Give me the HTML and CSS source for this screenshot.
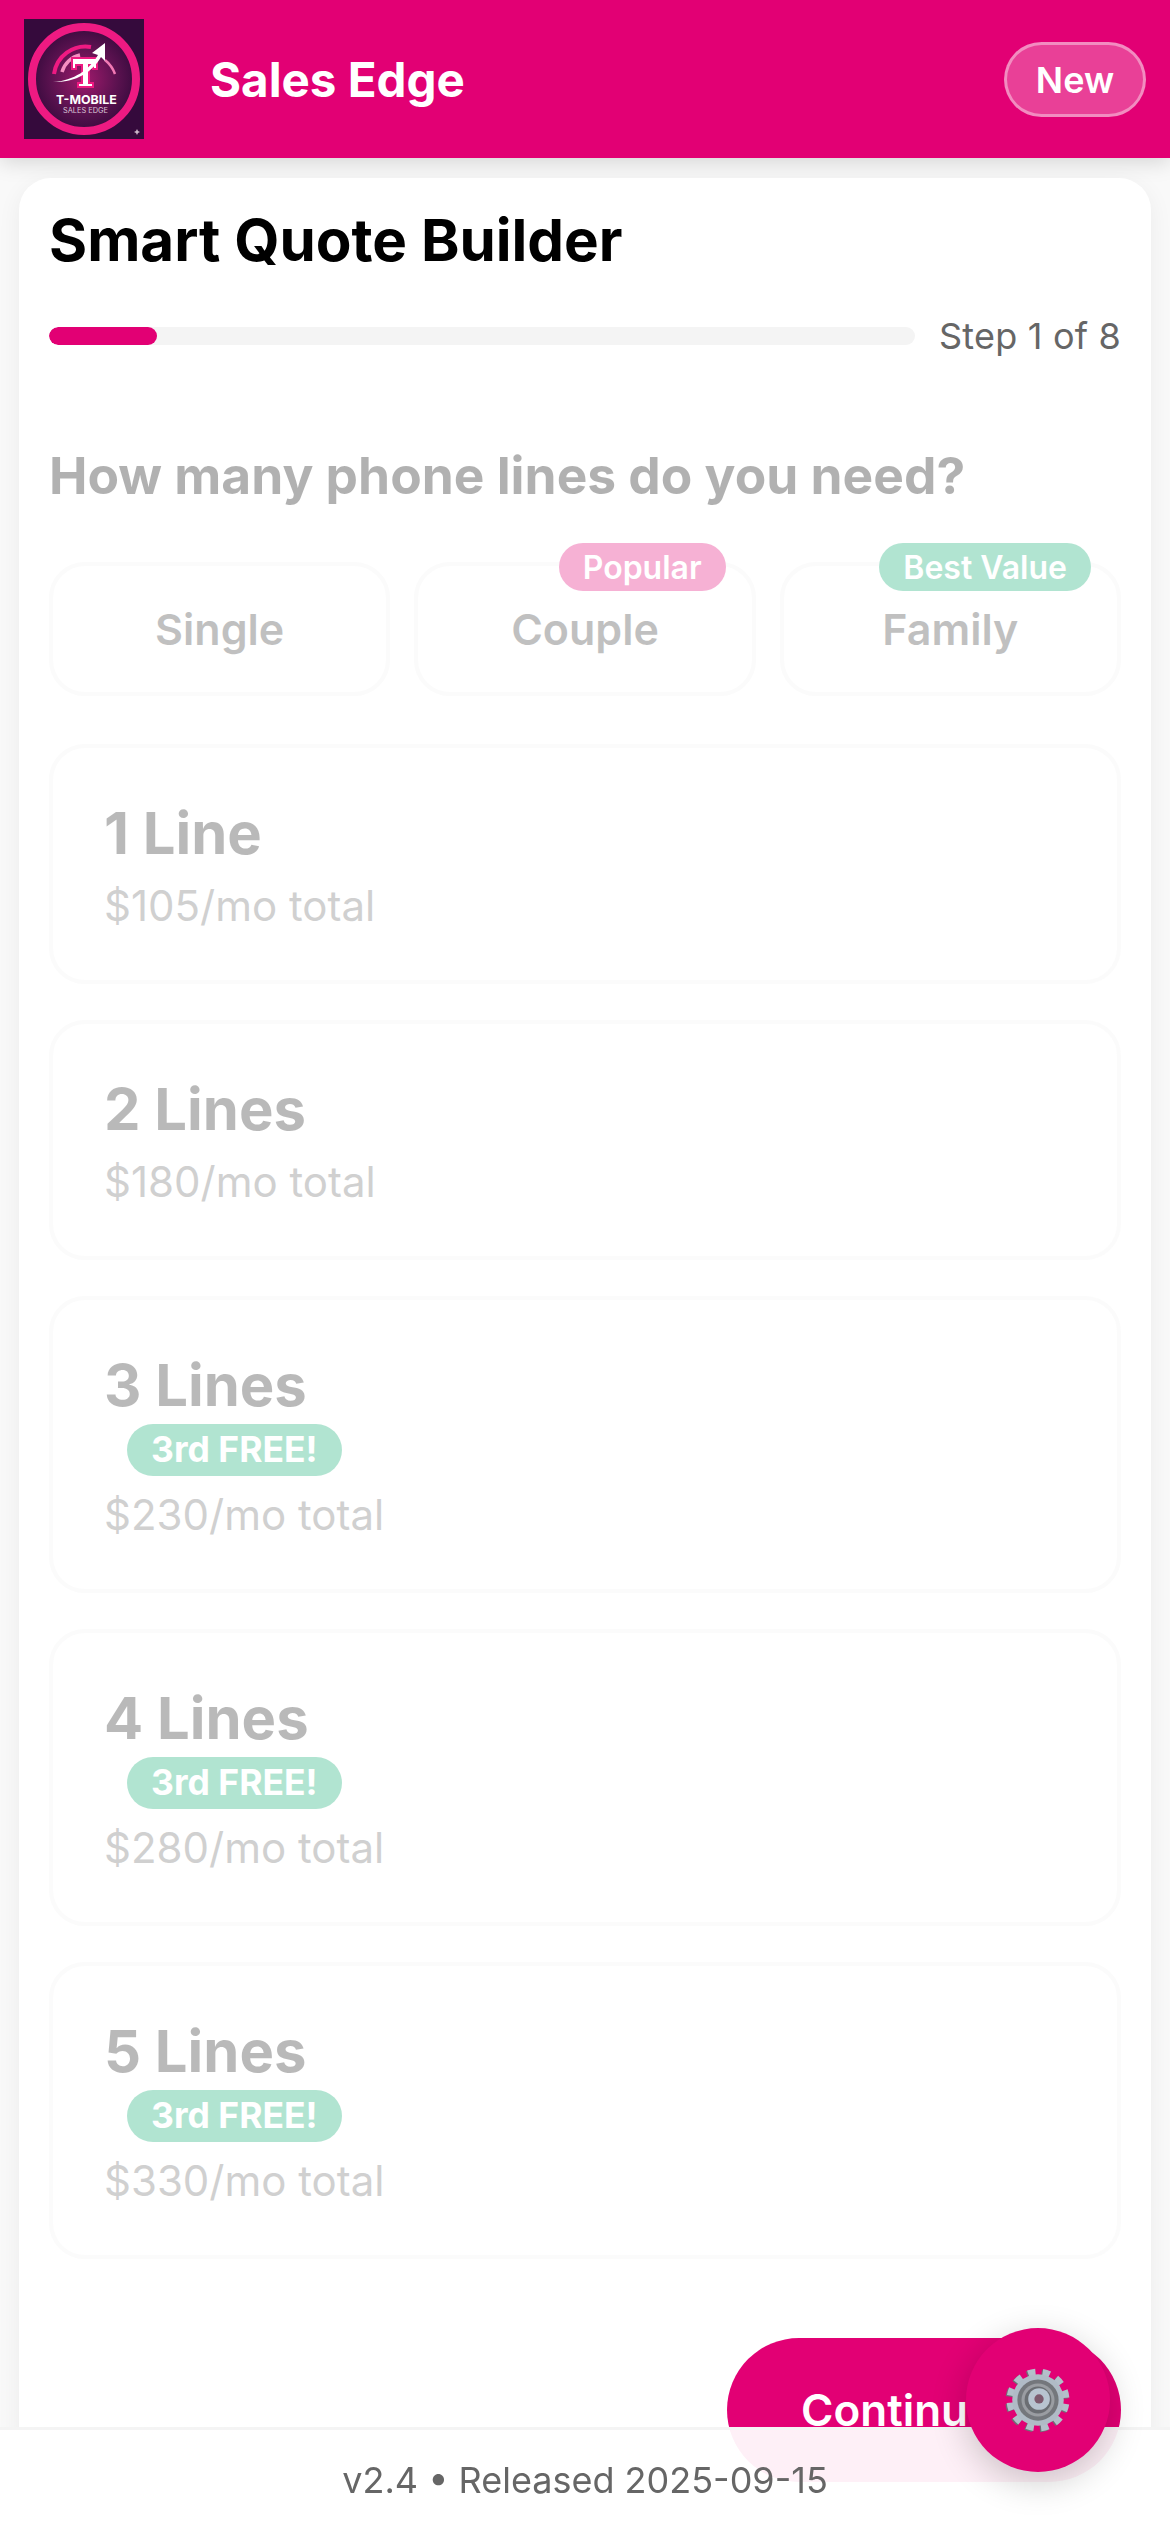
FILE: index.html
```html
<!DOCTYPE html>
<html lang="en">
<head>
    <meta charset="UTF-8">
    <meta name="viewport" content="width=device-width, initial-scale=1.0">
    <title>Sales Edge</title>
    <link rel="stylesheet" href="styles.css">
</head>
<body>
    <header class="app-header">
        <div class="brand">
            <svg class="logo" viewBox="0 0 120 120" aria-hidden="true">
                <defs>
                    <radialGradient id="logoBg" cx="50%" cy="50%" r="55%">
                        <stop offset="0" stop-color="#a01a6c"/>
                        <stop offset="0.6" stop-color="#5c1250"/>
                        <stop offset="1" stop-color="#350a3c"/>
                    </radialGradient>
                </defs>
                <rect width="120" height="120" fill="#350a3c"/>
                <circle cx="60" cy="60" r="50" fill="url(#logoBg)"/>
                <circle cx="60" cy="60" r="52" fill="none" stroke="#ee1a82" stroke-width="8"/>
                <path d="M30 55 A32 32 0 0 1 67 28" fill="none" stroke="#ee1a82" stroke-width="4"/>
                <path d="M38 53 A24 24 0 0 1 56 36" fill="none" stroke="#f58fc2" stroke-width="3.5"/>
                <path d="M91 55 A32 32 0 0 0 81 41" fill="none" stroke="#f27ab4" stroke-width="2.5"/>
                <path d="M48 39 H73 V50 H69 V46 H65 V64 H69 V68 H54 V64 H58 V46 H52 V50 H48 Z" fill="#fff" stroke="#ee1a82" stroke-width="2"/>
                <path d="M29 63 C50 62 66 50 74 36 L68 34 L81 24 L81 42 L77 38 C68 54 50 64 29 63 Z" fill="#fff"/>
                <text class="logo-name" x="32" y="85">T-MOBILE</text>
                <text class="logo-sub" x="39" y="94">SALES EDGE</text>
                <path d="M113 110 L114 112 L116 113 L114 114 L113 116 L112 114 L110 113 L112 112 Z" fill="#cbb6c8"/>
            </svg>
            <span class="app-title">Sales Edge</span>
        </div>
        <button class="new-btn">New</button>
    </header>

    <main class="quote-card">
        <h1 class="quote-title">Smart Quote Builder</h1>

        <div class="progress-row">
            <div class="progress-track">
                <div class="progress-fill" style="width: 12.5%"></div>
            </div>
            <span class="progress-label">Step 1 of 8</span>
        </div>

        <section class="step">
            <h2 class="step-question">How many phone lines do you need?</h2>

            <div class="presets">
                <div class="preset">Single</div>
                <div class="preset">Couple<span class="preset-tag tag-pink">Popular</span></div>
                <div class="preset">Family<span class="preset-tag tag-green">Best Value</span></div>
            </div>

            <div class="line-list">
                <div class="line-card">
                    <div class="line-name">1 Line</div>
                    <div class="line-price">$105/mo total</div>
                </div>
                <div class="line-card">
                    <div class="line-name">2 Lines</div>
                    <div class="line-price">$180/mo total</div>
                </div>
                <div class="line-card">
                    <div class="line-name">3 Lines</div>
                    <span class="free-tag">3rd FREE!</span>
                    <div class="line-price">$230/mo total</div>
                </div>
                <div class="line-card">
                    <div class="line-name">4 Lines</div>
                    <span class="free-tag">3rd FREE!</span>
                    <div class="line-price">$280/mo total</div>
                </div>
                <div class="line-card">
                    <div class="line-name">5 Lines</div>
                    <span class="free-tag">3rd FREE!</span>
                    <div class="line-price">$330/mo total</div>
                </div>
            </div>
        </section>

        <div class="actions">
            <button class="continue-btn">Continue</button>
        </div>
    </main>

    <footer class="version-bar">v2.4 • Released 2025-09-15</footer>

    <button class="settings-fab" aria-label="Settings">
        <svg class="gear" viewBox="0 0 64 64" aria-hidden="true">
            <g transform="rotate(8 32 32)">
                <circle cx="31" cy="33" r="26" fill="none" stroke="#6d7076" stroke-width="9" stroke-dasharray="6.8 6.81"/>
                <circle cx="32" cy="32" r="26" fill="none" stroke="#b4bfca" stroke-width="9" stroke-dasharray="6.8 6.81"/>
            </g>
            <circle cx="32" cy="32" r="25" fill="#b0bbc6"/>
            <circle cx="32" cy="32" r="20" fill="#74777c"/>
            <circle cx="32" cy="32" r="16" fill="#9a9da2"/>
            <circle cx="32" cy="32" r="13" fill="#6b6e73"/>
            <circle cx="33" cy="31" r="10.5" fill="#b8c4d0"/>
            <circle cx="33" cy="31" r="4.5" fill="#7d5a6e"/>
        </svg>
    </button>
</body>
</html>
```

FILE: styles.css
```css
* {
    box-sizing: border-box;
}

body {
    margin: 0;
    font-family: Inter, "Liberation Sans", sans-serif;
    background-color: #f9f9f9;
    color: #000;
}

/* header */
.app-header {
    display: flex;
    justify-content: space-between;
    align-items: center;
    height: 158px;
    padding: 0 24px;
    background-color: #e20074;
    box-shadow: 0 4px 20px rgba(0, 0, 0, 0.15);
}

.brand {
    display: flex;
    align-items: center;
    gap: 66px;
}

.logo {
    display: block;
    width: 120px;
    height: 120px;
}

.logo-name {
    font-size: 12.4px;
    font-weight: 700;
    fill: #fff;
}

.logo-sub {
    font-size: 7.4px;
    fill: #d9c8d8;
}

.app-title {
    font-size: 47.5px;
    font-weight: 700;
    color: #fff;
}

.new-btn {
    width: 142px;
    height: 75px;
    margin-top: 1px;
    font-family: inherit;
    font-size: 36px;
    font-weight: 600;
    color: #fff;
    background-color: rgba(255, 255, 255, 0.25);
    border: 3px solid rgba(255, 255, 255, 0.4);
    border-radius: 38px;
}

/* card */
.quote-card {
    margin: 20px 19px 0;
    padding: 24px 30px 0;
    height: 2354px;
    background-color: #fff;
    border-radius: 32px;
    box-shadow: 0 6px 24px rgba(0, 0, 0, 0.06);
}

.quote-title {
    margin: 0;
    font-size: 58.3px;
    line-height: 76px;
    font-weight: 700;
}

.progress-row {
    display: flex;
    align-items: center;
    gap: 24px;
    margin-top: 36px;
}

.progress-track {
    flex: 1;
    height: 18px;
    background-color: #f4f4f4;
    border-radius: 9px;
    overflow: hidden;
}

.progress-fill {
    height: 100%;
    background-color: #e20074;
    border-radius: 9px;
}

.progress-label {
    font-size: 36px;
    letter-spacing: 0.2px;
    color: #666;
}

.step {
    opacity: 0.3;
}

.step-question {
    margin: 82px 0 52px;
    font-size: 51.5px;
    line-height: 70px;
    font-weight: 700;
}

.presets {
    display: grid;
    grid-template-columns: repeat(3, 1fr);
    gap: 24px;
}

.preset {
    position: relative;
    height: 134px;
    display: flex;
    align-items: center;
    justify-content: center;
    font-size: 43px;
    font-weight: 600;
    color: #333;
    border: 4px solid #f2f2f2;
    border-radius: 36px;
}

.preset-tag {
    position: absolute;
    top: -23px;
    right: 26px;
    height: 48px;
    padding: 0 24px;
    display: flex;
    align-items: center;
    font-size: 32px;
    font-weight: 600;
    color: #fff;
    border-radius: 24px;
}

.tag-pink {
    background-color: #e20074;
}

.tag-green {
    background-color: #00a86b;
}

.line-list {
    display: flex;
    flex-direction: column;
    gap: 36px;
    margin-top: 48px;
}

.line-card {
    padding: 50px 51px 48px;
    border: 4px solid #f2f2f2;
    border-radius: 36px;
}

.line-name {
    font-size: 58px;
    line-height: 70px;
    font-weight: 700;
    color: #1a1a1a;
}

.line-price {
    margin-top: 12px;
    font-size: 42px;
    line-height: 52px;
    color: #666;
}

.free-tag {
    display: table;
    height: 51px;
    margin: 4px 0 13px 23px;
    padding: 0 24px;
    font-size: 35.5px;
    line-height: 52px;
    font-weight: 700;
    color: #fff;
    background-color: #00a86b;
    border-radius: 26px;
}

/* bottom */
.actions {
    display: flex;
    justify-content: flex-end;
    margin-top: 79px;
}

.continue-btn {
    width: 394px;
    height: 144px;
    padding: 0 0 0 74px;
    text-align: left;
    font-family: inherit;
    font-size: 44px;
    font-weight: 600;
    color: #fff;
    background-color: #e20074;
    border: none;
    border-radius: 72px;
}

.version-bar {
    position: fixed;
    left: 0;
    right: 0;
    bottom: 0;
    height: 105px;
    padding-top: 23px;
    text-align: center;
    font-size: 36px;
    line-height: 54px;
    color: #666;
    background-color: rgba(255, 255, 255, 0.94);
    border-top: 3px solid #f4f4f4;
}

.settings-fab {
    position: fixed;
    left: 966px;
    top: 2328px;
    width: 144px;
    height: 144px;
    padding: 0;
    display: flex;
    align-items: center;
    justify-content: center;
    background-color: #e20074;
    border: none;
    border-radius: 50%;
    box-shadow: 0 10px 36px rgba(0, 0, 0, 0.2);
}

.gear {
    width: 66px;
    height: 66px;
}
```
